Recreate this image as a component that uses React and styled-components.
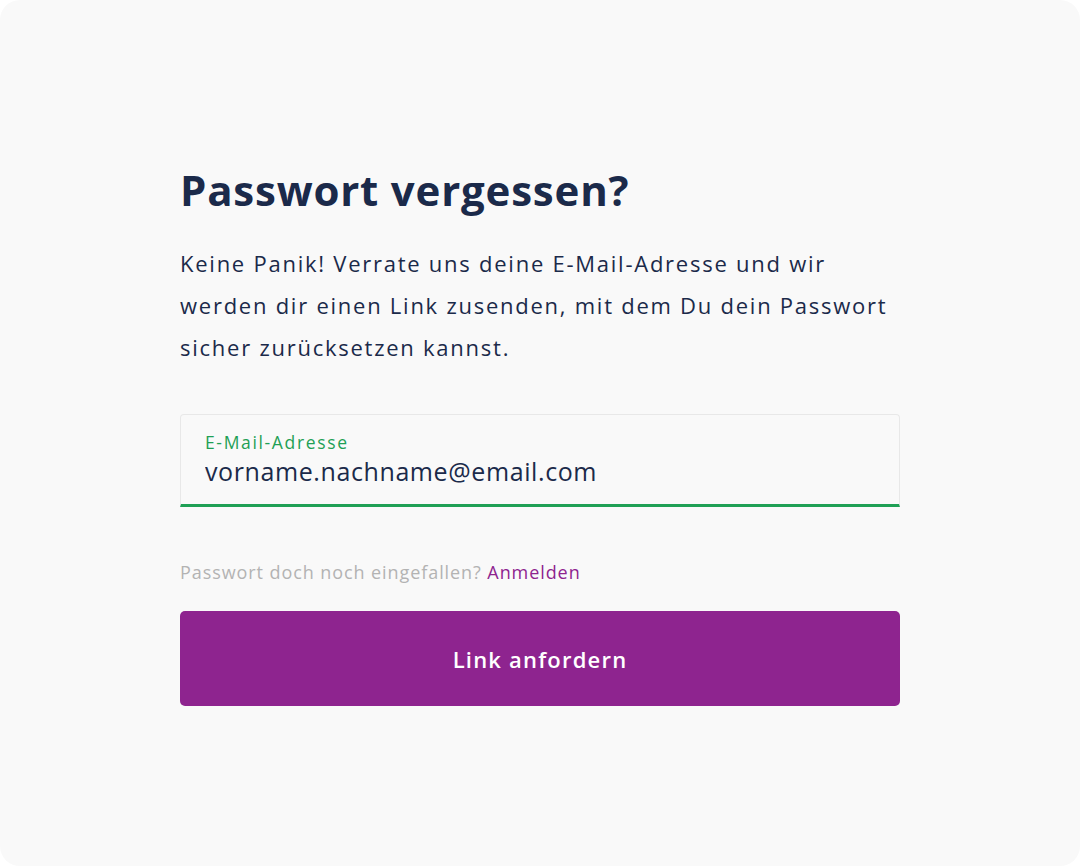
import React, { useState } from 'react';
import styled, { createGlobalStyle } from 'styled-components';

const GlobalStyle = createGlobalStyle`
  html, body {
    margin: 0;
    padding: 0;
    background: #ffffff;
  }
  * { box-sizing: border-box; }
`;

const Page = styled.div`
  width: 1080px;
  height: 866px;
  background: #f9f9f9;
  border-radius: 20px;
  font-family: "Open Sans", "Lato", sans-serif;
  color: #1b2a4a;
  display: flex;
  justify-content: center;
`;

const Form = styled.form`
  width: 720px;
  padding-top: 162px;
  display: flex;
  flex-direction: column;
`;

const Title = styled.h1`
  margin: 0;
  font-size: 42px;
  font-weight: 700;
  line-height: 56px;
  letter-spacing: 0.8px;
`;

const Intro = styled.p`
  margin: 24px 0 0;
  font-size: 22px;
  line-height: 42px;
  font-weight: 400;
  letter-spacing: 1.75px;
  white-space: nowrap;
`;

const Field = styled.label`
  margin-top: 46px;
  height: 93px;
  display: flex;
  flex-direction: column;
  padding: 15px 24px 0;
  background: #f9f9f9;
  border: 1px solid #e8e8e8;
  border-bottom: 3px solid #1fa055;
  border-radius: 4px 4px 0 0;
`;

const FieldLabel = styled.span`
  font-size: 17.5px;
  line-height: 24px;
  letter-spacing: 1.65px;
  color: #1fa055;
`;

const FieldInput = styled.input`
  border: none;
  outline: none;
  background: transparent;
  padding: 0;
  margin-top: 1px;
  font-family: inherit;
  font-size: 25px;
  line-height: 32px;
  letter-spacing: 0.6px;
  color: #1b2a4a;
`;

const Hint = styled.p`
  margin: 53px 0 0;
  font-size: 18px;
  line-height: 24px;
  letter-spacing: 0.92px;
  color: #b3b3b3;
`;

const HintLink = styled.a`
  color: #8e248f;
  text-decoration: none;
  cursor: pointer;
`;

const Submit = styled.button`
  margin-top: 27px;
  height: 95px;
  width: 100%;
  border: none;
  border-radius: 5px;
  background: #8e248f;
  color: #ffffff;
  font-family: inherit;
  font-size: 22px;
  font-weight: 600;
  letter-spacing: 1.2px;
  cursor: pointer;
`;

export default function App() {
  const [email, setEmail] = useState('vorname.nachname@email.com');

  return (
    <>
      <GlobalStyle />
      <Page>
        <Form onSubmit={e => e.preventDefault()}>
          <Title>Passwort vergessen?</Title>
          <Intro>
            Keine Panik! Verrate uns deine E-Mail-Adresse und wir<br />
            werden dir einen Link zusenden, mit dem Du dein Passwort<br />
            sicher zurücksetzen kannst.
          </Intro>
          <Field>
            <FieldLabel>E-Mail-Adresse</FieldLabel>
            <FieldInput value={email} onChange={e => setEmail(e.target.value)} />
          </Field>
          <Hint>
            Passwort doch noch eingefallen? <HintLink>Anmelden</HintLink>
          </Hint>
          <Submit type="submit">Link anfordern</Submit>
        </Form>
      </Page>
    </>
  );
}
